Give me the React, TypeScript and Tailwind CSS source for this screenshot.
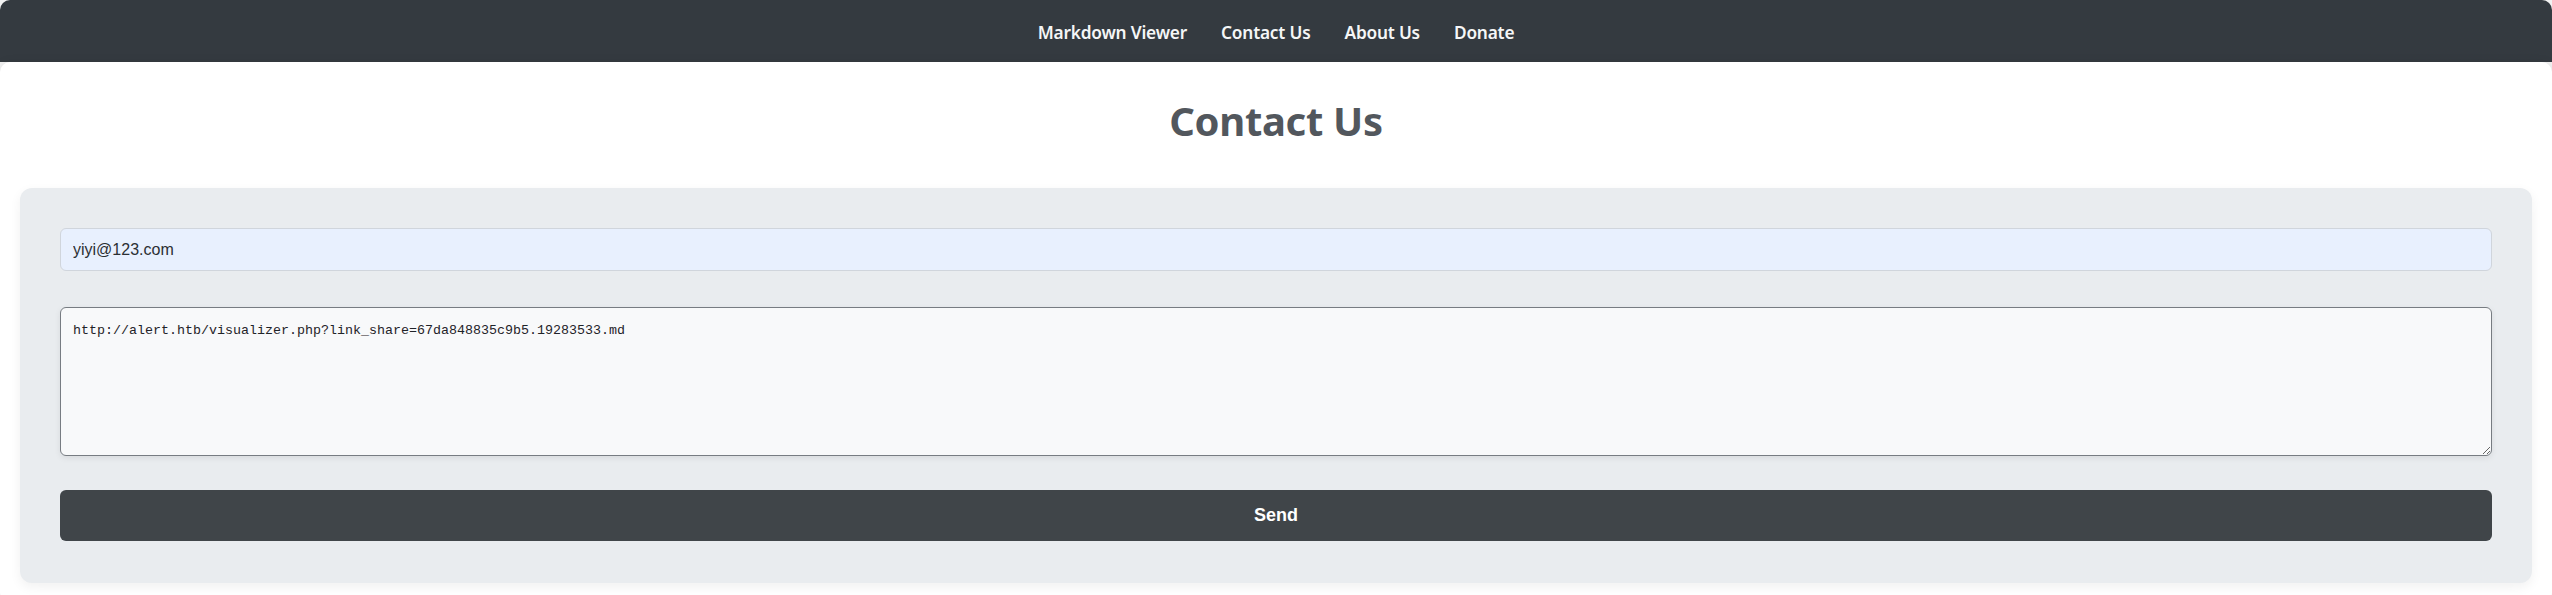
import React from "react";

export default function App() {
  const links = ["Markdown Viewer", "Contact Us", "About Us", "Donate"];
  return (
    <div className="min-h-screen bg-[#f2f2f2]">
      <nav className="h-[62px] pt-[3px] bg-[#343a40] rounded-t-[10px] flex items-center justify-center gap-[34px] font-['Noto_Sans',sans-serif]">
        {links.map((l) => (
          <a
            key={l}
            href="#"
            className="text-[17.3px] font-semibold text-[#f5f6f7] leading-none tracking-[-0.2px]"
          >
            {l}
          </a>
        ))}
      </nav>
      <div className="bg-white rounded-[10px] shadow-[0_0_10px_rgba(0,0,0,0.08)] px-5 pb-5">
        <h1 className="pt-[35px] pb-[43px] text-center text-[40px] leading-[48px] font-bold text-[#52575d] font-['Noto_Sans',sans-serif] tracking-[-0.3px]">
          Contact Us
        </h1>
        <div className="bg-[#e9ecef] rounded-[12px] px-10 pt-10 pb-[42px] shadow-[0_4px_12px_rgba(0,0,0,0.06)] flex flex-col">
          <input
            type="email"
            defaultValue="yiyi@123.com"
            className="h-[43px] w-full rounded-[6px] border border-[#d0d5dc] bg-[#e8f0fe] px-3 text-[16px] text-[#2b2f33] font-['Liberation_Sans',Arial,sans-serif] outline-none"
          />
          <textarea
            defaultValue="http://alert.htb/visualizer.php?link_share=67da848835c9b5.19283533.md"
            className="mt-[36px] h-[149px] w-full rounded-[6px] border border-[#777c82] bg-[#f8f9fa] px-[12px] pt-[13px] pb-[9px] text-[13.333px] leading-[20px] text-[#1f2328] font-['Liberation_Mono',monospace] shadow-[0_2px_6px_rgba(0,0,0,0.08)] outline-none"
          />
          <button className="mt-[34px] h-[51px] w-full rounded-[6px] bg-[#404549] text-white text-[18px] font-bold font-['Liberation_Sans',Arial,sans-serif]">
            Send
          </button>
        </div>
      </div>
    </div>
  );
}
